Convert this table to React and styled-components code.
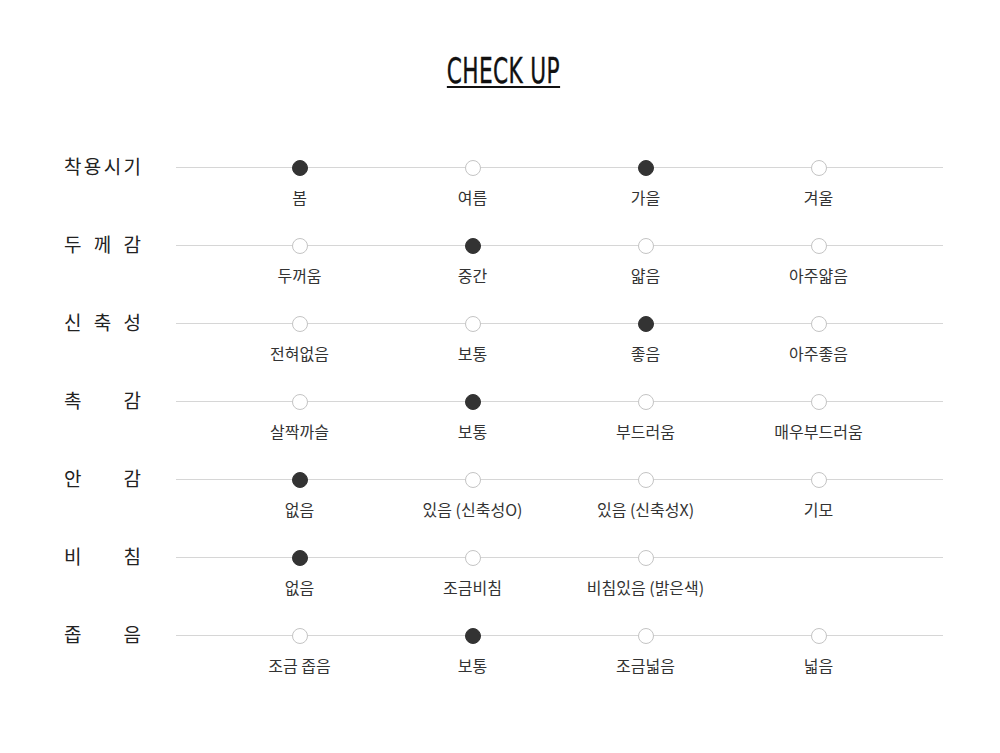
import styled, { createGlobalStyle } from "styled-components";

const GlobalStyle = createGlobalStyle`
  body {
    margin: 0;
    background: #fff;
    font-family: "Noto Sans CJK KR", "Noto Sans", sans-serif;
    color: #222;
  }
`;

const Page = styled.div`
  width: 879px;
  margin-left: 64px;
  padding-top: 56px;
`;

const TitleWrap = styled.div`
  display: flex;
  justify-content: center;
  margin-bottom: 72px;
`;

const Title = styled.h2`
  display: inline-block;
  margin: 0;
  font-family: "Liberation Sans Narrow", "DejaVu Sans Condensed", "Liberation Sans", sans-serif;
  font-weight: normal;
  font-size: 36px;
  line-height: 30px;
  letter-spacing: 0.5px;
  color: #111;
  -webkit-text-stroke: 0.35px #111;
  border-bottom: 2px solid #111;
  transform: scaleX(0.67);
`;

const Row = styled.div`
  display: grid;
  grid-template-columns: 112px 1fr;
  height: 78px;
`;

const RowLabel = styled.div`
  display: flex;
  justify-content: space-between;
  width: 77px;
  height: 16px;
  margin-top: -3px;
  align-items: center;
  font-size: 19px;
  color: #222;
`;

const Track = styled.div`
  position: relative;
  display: grid;
  grid-template-columns: repeat(4, 173px);
  padding: 0 37px;

  &::before {
    content: "";
    position: absolute;
    left: 0;
    right: 0;
    top: 7px;
    height: 1px;
    background: #d6d6d6;
  }
`;

const Cell = styled.div`
  display: flex;
  flex-direction: column;
  align-items: center;
`;

const Dot = styled.span`
  position: relative;
  box-sizing: border-box;
  width: 16px;
  height: 16px;
  border-radius: 50%;
  background: ${(p) => (p.$on ? "#333" : "#fff")};
  border: 1px solid ${(p) => (p.$on ? "#333" : "#c4c4c4")};
`;

const Option = styled.span`
  margin-top: 11px;
  font-size: 16px;
  line-height: 20px;
  color: #333;
  white-space: nowrap;
`;

const rows = [
  { label: ["착", "용", "시", "기"], options: ["봄", "여름", "가을", "겨울"], on: [0, 2] },
  { label: ["두", "께", "감"], options: ["두꺼움", "중간", "얇음", "아주얇음"], on: [1] },
  { label: ["신", "축", "성"], options: ["전혀없음", "보통", "좋음", "아주좋음"], on: [2] },
  { label: ["촉", "감"], options: ["살짝까슬", "보통", "부드러움", "매우부드러움"], on: [1] },
  { label: ["안", "감"], options: ["없음", "있음 (신축성O)", "있음 (신축성X)", "기모"], on: [0] },
  { label: ["비", "침"], options: ["없음", "조금비침", "비침있음 (밝은색)"], on: [0] },
  { label: ["좁", "음"], options: ["조금 좁음", "보통", "조금넓음", "넓음"], on: [1] },
];

export default function App() {
  return (
    <>
      <GlobalStyle />
      <Page>
        <TitleWrap>
          <Title>CHECK UP</Title>
        </TitleWrap>
        {rows.map((r, i) => (
          <Row key={i}>
            <RowLabel>
              {r.label.map((c, j) => (
                <span key={j}>{c}</span>
              ))}
            </RowLabel>
            <Track>
              {r.options.map((o, j) => (
                <Cell key={j}>
                  <Dot $on={r.on.includes(j)} />
                  <Option>{o}</Option>
                </Cell>
              ))}
            </Track>
          </Row>
        ))}
      </Page>
    </>
  );
}
